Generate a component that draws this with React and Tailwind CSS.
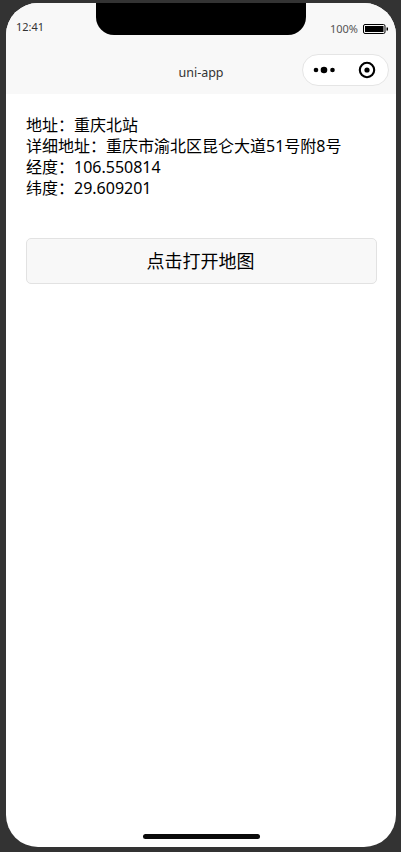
export default function App() {
  return (
    <div className="w-[401px] h-[852px] bg-[#333333] pt-[3px] pl-[6px] overflow-hidden" style={{ fontFamily: '"Noto Sans", "Noto Sans CJK SC", sans-serif' }}>
      <div className="relative w-[390px] h-[844px] bg-white rounded-[32px] overflow-hidden flex flex-col">
        <div className="absolute top-0 left-[90px] w-[210px] h-[32px] bg-black rounded-b-[18px]" />
        <div className="h-[91px] bg-[#f8f8f8] flex flex-col shrink-0">
          <div className="h-[44px] flex items-start justify-between pl-[10px] pr-[8px] text-[10px] text-[#333333]">
            <span className="mt-[18px] leading-[12px] text-[11px]">12:41</span>
            <div className="mt-[20px] flex items-center gap-[5px]">
              <span className="leading-[12px] text-[#555555] text-[11px]">100%</span>
              <svg width="25" height="10" viewBox="0 0 25 10">
                <rect x="0.5" y="0.5" width="21.5" height="9" rx="1.5" fill="none" stroke="#000" />
                <rect x="2" y="2" width="18.5" height="6" fill="#000" />
                <rect x="23.5" y="3.5" width="1.5" height="3" fill="#000" />
              </svg>
            </div>
          </div>
          <div className="relative flex-1 flex items-center justify-center">
            <span className="text-[12.5px] text-[#333333] mt-[4px] leading-[16px]">uni-app</span>
            <div className="absolute right-[7px] top-[7px] w-[87px] h-[32px] rounded-full border border-[#e5e5e5] bg-white flex items-center justify-between pl-[10px] pr-[12px]">
              <svg width="23" height="8" viewBox="0 0 23 8">
                <circle cx="3" cy="4" r="2.3" fill="#000" />
                <circle cx="11" cy="4" r="3.3" fill="#000" />
                <circle cx="19.5" cy="4" r="2.3" fill="#000" />
              </svg>
              <svg width="18" height="18" viewBox="0 0 18 18">
                <circle cx="9" cy="9" r="7.2" fill="none" stroke="#000" strokeWidth="2.1" />
                <circle cx="9" cy="9" r="2.6" fill="#000" />
              </svg>
            </div>
          </div>
        </div>
        <div className="flex-1 pt-[21px] px-[20px] text-[16px] leading-[21px] text-black">
          <div>地址：重庆北站</div>
          <div>详细地址：重庆市渝北区昆仑大道51号附8号</div>
          <div>经度：106.550814</div>
          <div>纬度：29.609201</div>
          <button className="mt-[39px] w-[351px] h-[46px] pr-[2px] bg-[#f8f8f8] border border-[#e2e2e2] rounded-[5px] text-[18px] text-black">点击打开地图</button>
        </div>
        <div className="absolute bottom-[8px] left-[137px] w-[117px] h-[5px] rounded-full bg-[#0a0a0a]" />
      </div>
    </div>
  );
}
